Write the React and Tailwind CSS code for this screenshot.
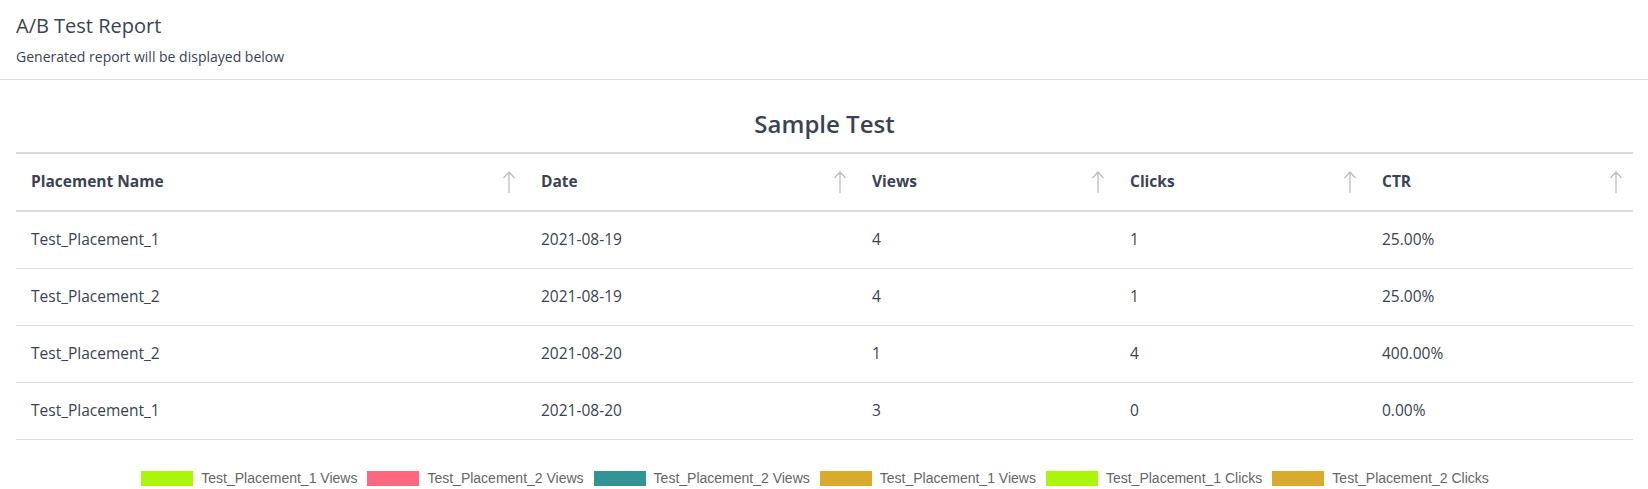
const cols = [
  { name: 'Placement Name', w: 'w-[510px]' },
  { name: 'Date', w: 'w-[331px]' },
  { name: 'Views', w: 'w-[258px]' },
  { name: 'Clicks', w: 'w-[252px]' },
  { name: 'CTR', w: 'flex-1' },
];

const rows = [
  ['Test_Placement_1', '2021-08-19', '4', '1', '25.00%'],
  ['Test_Placement_2', '2021-08-19', '4', '1', '25.00%'],
  ['Test_Placement_2', '2021-08-20', '1', '4', '400.00%'],
  ['Test_Placement_1', '2021-08-20', '3', '0', '0.00%'],
];

const legend = [
  ['#aaf50a', 'Test_Placement_1 Views'],
  ['#ff6680', 'Test_Placement_2 Views'],
  ['#339494', 'Test_Placement_2 Views'],
  ['#d8ab2e', 'Test_Placement_1 Views'],
  ['#aaf50a', 'Test_Placement_1 Clicks'],
  ['#d8ab2e', 'Test_Placement_2 Clicks'],
];

function SortArrow() {
  return (
    <svg width="14" height="24" viewBox="0 0 14 24" fill="none" stroke="#b9bec6" strokeWidth="1.3">
      <path d="M7 23V2M1.5 8L7 2l5.5 6" />
    </svg>
  );
}

export default function App() {
  return (
    <div className="w-[1648px] h-[489px] overflow-hidden bg-white text-[#3a4353]" style={{ fontFamily: '"Open Sans", "Noto Sans", sans-serif' }}>
      <div className="px-4 pt-[12px] pb-[12px] border-b border-[#dcdfe3]">
        <h1 className="text-[20px] leading-[28px]">A/B Test Report</h1>
        <p className="text-[14px] mt-[7px] leading-[20px]">Generated report will be displayed below</p>
      </div>
      <div className="pl-4 pr-[15px]">
        <h2 className="text-center text-[24px] font-semibold leading-[34px] mt-[27px] mb-[11px]">Sample Test</h2>
        <div className="border-t-2 border-[#d9dce0]">
          <div className="flex h-[58px] items-center border-b-2 border-[#d9dce0]">
            {cols.map(c => (
              <div key={c.name} className={`${c.w} flex items-center justify-between pl-[15px] pr-[10px] text-[15.5px] font-bold`}>
                <span>{c.name}</span>
                <SortArrow />
              </div>
            ))}
          </div>
          {rows.map((r, i) => (
            <div key={i} className="flex h-[57px] items-center border-b border-[#dcdfe3] text-[15.5px]">
              {r.map((v, j) => (
                <div key={j} className={`${cols[j].w} pl-[15px]`}>{v}</div>
              ))}
            </div>
          ))}
        </div>
      </div>
      <div className="flex justify-center gap-[10px] mt-[28px] pr-[18px]" style={{ fontFamily: '"Liberation Sans", Arial, sans-serif' }}>
        {legend.map(([c, t], i) => (
          <div key={i} className="flex items-center gap-[8px] text-[14px] text-[#666]">
            <span className="w-[52px] h-[15px]" style={{ background: c }} />
            <span>{t}</span>
          </div>
        ))}
      </div>
    </div>
  );
}
